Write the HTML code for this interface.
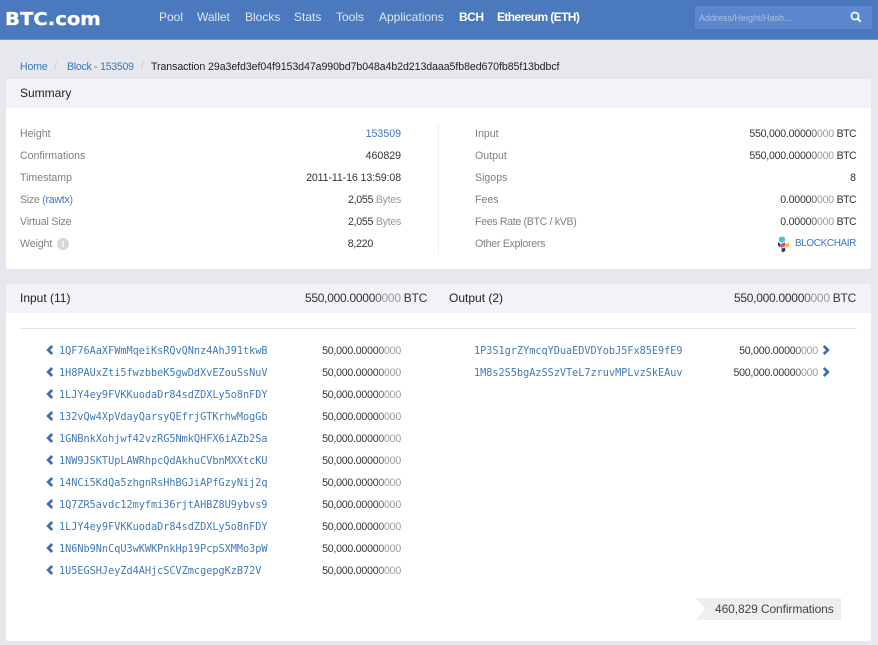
<!DOCTYPE html>
<html><head><meta charset="utf-8"><style>
html,body{margin:0;padding:0}
html{background:#e7e8ed}
body{width:878px;height:645px;overflow:hidden;background:#e7e8ed;position:relative;font-family:"Liberation Sans",sans-serif;font-size:10.6px;color:#333;filter:blur(.3px)}
div,a,span.a{white-space:nowrap}
.p{position:absolute;line-height:14px}
.r{position:absolute;line-height:14px;text-align:right}
.l{color:#808080}
.b{color:#3a77b8}
.g{color:#999}
.k{color:#666}
.am{letter-spacing:-.24px}
.u{letter-spacing:-.6px}
.m{position:absolute;line-height:14px;font-family:"DejaVu Sans Mono",monospace;font-size:10.2px;color:#3f7ab8}
.n{position:absolute;top:10px;line-height:15px;font-size:12px;color:#dfe7f4}
.h{font-size:12px;letter-spacing:-.27px}
svg{position:absolute}
</style></head><body>
<div style="position:absolute;left:0;top:0;width:878px;height:40px;background:#4a79bd;border-bottom:1px solid #6f95cb;box-sizing:border-box"></div>
<div class="p" style="left:5px;top:7px;line-height:26px;font-family:'DejaVu Sans',sans-serif;font-size:18px;font-weight:bold;color:#fff;-webkit-text-stroke:.3px #fff;transform:scaleX(1.09);transform-origin:left center">BTC.com</div>
<div class="n" style="left:159px">Pool</div>
<div class="n" style="left:197px">Wallet</div>
<div class="n" style="left:245px">Blocks</div>
<div class="n" style="left:294px">Stats</div>
<div class="n" style="left:336px">Tools</div>
<div class="n" style="left:379px">Applications</div>
<div class="n" style="left:459px;color:#fff;font-weight:bold;letter-spacing:-.5px">BCH</div>
<div class="n" style="left:497px;color:#fff;font-weight:bold;letter-spacing:-.6px">Ethereum (ETH)</div>
<div style="position:absolute;left:695px;top:6px;width:177px;height:23px;background:#5b88cd;border-radius:2px"></div>
<div class="p" style="left:699px;top:11px;font-size:9px;color:#a9c0e2">Address/Height/Hash...</div>
<svg style="left:850px;top:11px" width="12" height="12" viewBox="0 0 12 12"><circle cx="5" cy="5" r="3.6" fill="none" stroke="#fff" stroke-width="1.6"/><path d="M7.7 7.7L10.7 10.7" stroke="#fff" stroke-width="1.9"/></svg>

<div class="p b" style="left:20px;top:60px;letter-spacing:-.15px">Home</div>
<div class="p" style="left:54px;top:60px;color:#ccc">/</div>
<div class="p b" style="left:67px;top:60px;letter-spacing:-.28px">Block - 153509</div>
<div class="p" style="left:141px;top:60px;color:#ccc">/</div>
<div class="p" style="left:151px;top:60px;color:#222;letter-spacing:-.07px">Transaction 29a3efd3ef04f9153d47a990bd7b048a4b2d213daaa5fb8ed670fb85f13bdbcf</div>

<div style="position:absolute;left:6px;top:79px;width:865px;height:190px;background:#fff;border-radius:2px"></div>
<div style="position:absolute;left:6px;top:79px;width:865px;height:29px;background:#f2f3f8;border-radius:2px 2px 0 0"></div>
<div class="p" style="left:20px;top:86px;font-size:12px;color:#222">Summary</div>
<div style="position:absolute;left:438px;top:123px;width:1px;height:132px;background:#eceef2"></div>

<div class="p l" style="left:20px;top:127px">Height</div><div class="r b" style="right:477px;top:127px">153509</div>
<div class="p l" style="left:20px;top:149px">Confirmations</div><div class="r" style="right:477px;top:149px">460829</div>
<div class="p l" style="left:20px;top:171px">Timestamp</div><div class="r" style="right:477px;top:171px;letter-spacing:-.1px">2011-11-16 13:59:08</div>
<div class="p l" style="left:20px;top:193px;letter-spacing:-.27px">Size (<span class="b">rawtx</span>)</div><div class="r" style="right:477px;top:193px;letter-spacing:-.27px">2,055 <span class="g">Bytes</span></div>
<div class="p l" style="left:20px;top:215px;letter-spacing:-.17px">Virtual Size</div><div class="r" style="right:477px;top:215px;letter-spacing:-.27px">2,055 <span class="g">Bytes</span></div>
<div class="p l" style="left:20px;top:237px;letter-spacing:-.1px">Weight</div>
<div style="position:absolute;left:57px;top:238px;width:12px;height:12px;border-radius:50%;background:#d6d6d6;color:#fff;font:bold 9px/12px 'Liberation Serif',serif;text-align:center">i</div>
<div class="r" style="right:505px;top:237px;letter-spacing:-.25px">8,220</div>

<div class="p l" style="left:475px;top:127px">Input</div><div class="r am" style="right:22px;top:127px">550,000.0000<span class="k">0</span><span class="g">000</span> <span class="u">BTC</span></div>
<div class="p l" style="left:475px;top:149px">Output</div><div class="r am" style="right:22px;top:149px">550,000.0000<span class="k">0</span><span class="g">000</span> <span class="u">BTC</span></div>
<div class="p l" style="left:475px;top:171px">Sigops</div><div class="r" style="right:22px;top:171px">8</div>
<div class="p l" style="left:475px;top:193px">Fees</div><div class="r am" style="right:22px;top:193px">0.0000<span class="k">0</span><span class="g">000</span> <span class="u">BTC</span></div>
<div class="p l" style="left:475px;top:215px;letter-spacing:-.33px">Fees Rate (BTC / kVB)</div><div class="r am" style="right:22px;top:215px">0.0000<span class="k">0</span><span class="g">000</span> <span class="u">BTC</span></div>
<div class="p l" style="left:475px;top:237px;letter-spacing:-.27px">Other Explorers</div>
<svg style="left:777px;top:236px" width="13" height="17" viewBox="0 0 13 17"><path d="M2 1.5L6 0.5L8 2L8 5L4 7L2 5Z" fill="#4cc3cf"/><path d="M1 6L3.5 8L3.5 11.5L1 9.5Z" fill="#333"/><path d="M4 8L8 6L8 10L4 12Z" fill="#e0409a"/><path d="M8 8L12 6.5L12 10.5L8.5 12Z" fill="#f2c230"/><path d="M4.5 12.5L8 11.5L8.5 14.5L6 16.5L4.5 15Z" fill="#3d3d3d"/></svg>
<div class="r b" style="right:22px;top:237px;font-size:10px;letter-spacing:-.4px">BLOCKCHAIR</div>

<div style="position:absolute;left:6px;top:284px;width:865px;height:357px;background:#fff;border-radius:2px"></div>
<div style="position:absolute;left:6px;top:284px;width:865px;height:29px;background:#f2f3f8;border-radius:2px 2px 0 0"></div>
<div class="p" style="left:20px;top:291px;font-size:12px;color:#222">Input (11)</div>
<div class="r h" style="right:451px;top:291px">550,000.0000<span class="k">0</span><span class="g">000</span> BTC</div>
<div class="p" style="left:449px;top:291px;font-size:12px;color:#222">Output (2)</div>
<div class="r h" style="right:22px;top:291px">550,000.0000<span class="k">0</span><span class="g">000</span> BTC</div>
<div style="position:absolute;left:20px;top:328px;width:837px;height:1px;background:#e4e5e9"></div>

<svg width="0" height="0"><defs><path id="cl" d="M6.2 1L2.2 5L6.2 9" fill="none" stroke="#3a6fae" stroke-width="2.7"/><path id="cr" d="M1.8 1L5.8 5L1.8 9" fill="none" stroke="#3a6fae" stroke-width="2.7"/></defs></svg>

<svg style="left:46px;top:345px" width="8" height="10"><use href="#cl"/></svg><div class="m" style="left:59px;top:345px">1QF76AaXFWmMqeiKsRQvQNnz4AhJ91tkwB</div><div class="r am" style="right:477px;top:344px">50,000.0000<span class="k">0</span><span class="g">000</span></div>
<svg style="left:46px;top:367px" width="8" height="10"><use href="#cl"/></svg><div class="m" style="left:59px;top:367px">1H8PAUxZti5fwzbbeK5gwDdXvEZouSsNuV</div><div class="r am" style="right:477px;top:366px">50,000.0000<span class="k">0</span><span class="g">000</span></div>
<svg style="left:46px;top:389px" width="8" height="10"><use href="#cl"/></svg><div class="m" style="left:59px;top:389px">1LJY4ey9FVKKuodaDr84sdZDXLy5o8nFDY</div><div class="r am" style="right:477px;top:388px">50,000.0000<span class="k">0</span><span class="g">000</span></div>
<svg style="left:46px;top:411px" width="8" height="10"><use href="#cl"/></svg><div class="m" style="left:59px;top:411px">132vQw4XpVdayQarsyQEfrjGTKrhwMogGb</div><div class="r am" style="right:477px;top:410px">50,000.0000<span class="k">0</span><span class="g">000</span></div>
<svg style="left:46px;top:433px" width="8" height="10"><use href="#cl"/></svg><div class="m" style="left:59px;top:433px">1GNBnkXohjwf42vzRG5NmkQHFX6iAZb2Sa</div><div class="r am" style="right:477px;top:432px">50,000.0000<span class="k">0</span><span class="g">000</span></div>
<svg style="left:46px;top:455px" width="8" height="10"><use href="#cl"/></svg><div class="m" style="left:59px;top:455px">1NW9JSKTUpLAWRhpcQdAkhuCVbnMXXtcKU</div><div class="r am" style="right:477px;top:454px">50,000.0000<span class="k">0</span><span class="g">000</span></div>
<svg style="left:46px;top:477px" width="8" height="10"><use href="#cl"/></svg><div class="m" style="left:59px;top:477px">14NCi5KdQa5zhgnRsHhBGJiAPfGzyNij2q</div><div class="r am" style="right:477px;top:476px">50,000.0000<span class="k">0</span><span class="g">000</span></div>
<svg style="left:46px;top:499px" width="8" height="10"><use href="#cl"/></svg><div class="m" style="left:59px;top:499px">1Q7ZR5avdc12myfmi36rjtAHBZ8U9ybvs9</div><div class="r am" style="right:477px;top:498px">50,000.0000<span class="k">0</span><span class="g">000</span></div>
<svg style="left:46px;top:521px" width="8" height="10"><use href="#cl"/></svg><div class="m" style="left:59px;top:521px">1LJY4ey9FVKKuodaDr84sdZDXLy5o8nFDY</div><div class="r am" style="right:477px;top:520px">50,000.0000<span class="k">0</span><span class="g">000</span></div>
<svg style="left:46px;top:543px" width="8" height="10"><use href="#cl"/></svg><div class="m" style="left:59px;top:543px">1N6Nb9NnCqU3wKWKPnkHp19PcpSXMMo3pW</div><div class="r am" style="right:477px;top:542px">50,000.0000<span class="k">0</span><span class="g">000</span></div>
<svg style="left:46px;top:565px" width="8" height="10"><use href="#cl"/></svg><div class="m" style="left:59px;top:565px">1U5EGSHJeyZd4AHjcSCVZmcgepgKzB72V</div><div class="r am" style="right:477px;top:564px">50,000.0000<span class="k">0</span><span class="g">000</span></div>

<div class="m" style="left:474px;top:345px">1P3S1grZYmcqYDuaEDVDYobJ5Fx85E9fE9</div><div class="r am" style="right:60px;top:344px">50,000.0000<span class="k">0</span><span class="g">000</span></div><svg style="left:822px;top:345px" width="8" height="10"><use href="#cr"/></svg>
<div class="m" style="left:474px;top:367px">1M8s2S5bgAzSSzVTeL7zruvMPLvzSkEAuv</div><div class="r am" style="right:60px;top:366px">500,000.0000<span class="k">0</span><span class="g">000</span></div><svg style="left:822px;top:367px" width="8" height="10"><use href="#cr"/></svg>

<svg style="left:696px;top:598px" width="146" height="22"><path d="M0 0H145V22H0L9 11Z" fill="#eeeeee"/></svg>
<div class="p" style="left:715px;top:602px;font-size:12px;letter-spacing:-.1px;color:#444">460,829 Confirmations</div>
</body></html>
